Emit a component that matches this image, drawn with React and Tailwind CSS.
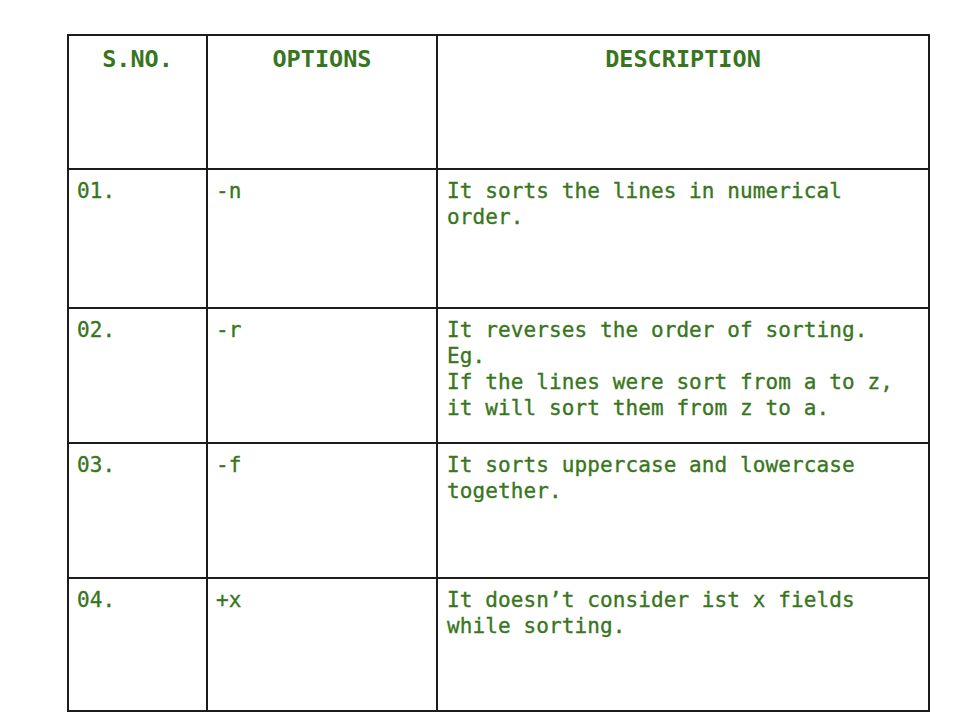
import React from 'react';

const rows = [
  { no: '01.', opt: '-n', desc: ['It sorts the lines in numerical order.'], h: 'h-[139px]' },
  {
    no: '02.',
    opt: '-r',
    desc: ['It reverses the order of sorting.', 'Eg.', 'If the lines were sort from a to z,', 'it will sort them from z to a.'],
    h: 'h-[135px]',
  },
  { no: '03.', opt: '-f', desc: ['It sorts uppercase and lowercase together.'], h: 'h-[135px]' },
  { no: '04.', opt: '+x', desc: ['It doesn’t consider ist x fields while sorting.'], h: 'h-[133px]' },
];

const App = () => {
  return (
    <div className="w-[960px] h-[720px] bg-white pt-[34px] pl-[67px]">
      <table
        className="border-collapse table-fixed w-[861px] text-[#38761d]"
        style={{ fontFamily: '"DejaVu Sans Mono", "Liberation Mono", monospace' }}
      >
        <colgroup>
          <col className="w-[139px]" />
          <col className="w-[230px]" />
          <col className="w-[492px]" />
        </colgroup>
        <thead>
          <tr className="h-[134px]">
            <th className="border-2 border-[#1c1c1c] align-top pt-[8px] text-center text-[23.5px] leading-[30px] font-bold">S.NO.</th>
            <th className="border-2 border-[#1c1c1c] align-top pt-[8px] text-center text-[23.5px] leading-[30px] font-bold">OPTIONS</th>
            <th className="border-2 border-[#1c1c1c] align-top pt-[8px] text-center text-[23.5px] leading-[30px] font-bold">DESCRIPTION</th>
          </tr>
        </thead>
        <tbody>
          {rows.map((r) => (
            <tr key={r.no} className={r.h}>
              <td className="border-2 border-[#1c1c1c] align-top pt-[8px] px-[8px] text-[21px] leading-[26px] tracking-[0.1px] [-webkit-text-stroke:0.35px_#38761d]">{r.no}</td>
              <td className="border-2 border-[#1c1c1c] align-top pt-[8px] px-[8px] text-[21px] leading-[26px] tracking-[0.1px] [-webkit-text-stroke:0.35px_#38761d]">{r.opt}</td>
              <td className="border-2 border-[#1c1c1c] align-top pt-[8px] px-[9px] text-[21px] leading-[26px] tracking-[0.1px] [-webkit-text-stroke:0.35px_#38761d]">
                {r.desc.map((line, i) => (
                  <div key={i}>{line}</div>
                ))}
              </td>
            </tr>
          ))}
        </tbody>
      </table>
    </div>
  );
};

export default App;
